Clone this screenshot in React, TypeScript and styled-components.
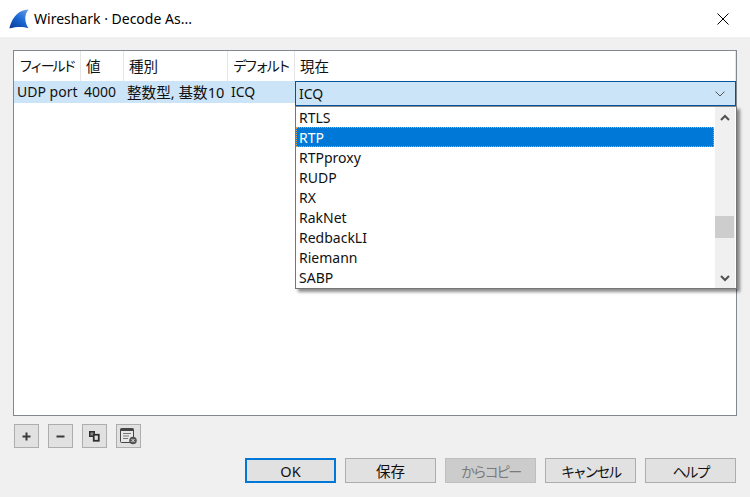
import React from "react";
import styled, { createGlobalStyle } from "styled-components";

const FONT = `"Noto Sans", "Noto Sans CJK JP", sans-serif`;

const Global = createGlobalStyle`
  html, body { margin: 0; padding: 0; background: #f0f0f0; }
  * { box-sizing: border-box; }
`;

const Dialog = styled.div`
  width: 750px;
  height: 497px;
  display: flex;
  flex-direction: column;
  background: #f0f0f0;
  font-family: ${FONT};
  font-size: 14px;
  color: #111;
  overflow: hidden;
`;

const TitleBar = styled.div`
  height: 37px;
  background: #fff;
  display: flex;
  align-items: center;
  padding: 0 21px 0 9px;
  gap: 5px;
`;

const TitleText = styled.div`
  flex: 1;
  color: #000;
`;

const Content = styled.div`
  flex: 1;
  display: flex;
  flex-direction: column;
  padding: 13px 13px 14px;
`;

const TableFrame = styled.div`
  position: relative;
  height: 366px;
  background: #fff;
  border: 1px solid #828790;
`;

const Grid = styled.div`
  display: grid;
  grid-template-columns: 67px 43px 104px 67px 1fr;
`;

const HeadCell = styled.div<{ $kana?: boolean }>`
  height: 30px;
  line-height: 30px;
  padding-left: 5px;
  white-space: nowrap;
  border-right: 1px solid #e5e5e5;
  font-size: ${(p) => (p.$kana ? "14px" : "14.5px")};
  letter-spacing: ${(p) => (p.$kana ? "-3px" : "0")};
  &:last-child { border-right: none; }
`;

const RowCell = styled.div<{ $cjk?: boolean }>`
  height: 22px;
  line-height: 22px;
  padding-left: 3px;
  white-space: nowrap;
  background: #cce4f7;
  font-size: ${(p) => (p.$cjk ? "14.6px" : "14px")};
`;

const Overlay = styled.div`
  position: absolute;
  top: 30px;
  left: 281px;
  right: 0;
`;

const Combo = styled.div`
  height: 25px;
  padding: 0 10px 0 3px;
  display: flex;
  align-items: center;
  justify-content: space-between;
  background: #cce4f7;
  border: 1px solid #005499;
`;

const Popup = styled.div`
  display: flex;
  height: 183px;
  background: #fff;
  border: 1px solid #767676;
  border-top-color: #8a8a8a;
  box-shadow: 3px 3px 3px rgba(0, 0, 0, 0.45);
  width: 442px;
`;

const List = styled.div`
  flex: 1;
`;

const Item = styled.div<{ $selected?: boolean }>`
  height: 20px;
  line-height: 20px;
  margin-right: 1px;
  padding-left: 2px;
  border: 1px dotted ${(p) => (p.$selected ? "#f2a23c" : "transparent")};
  background: ${(p) => (p.$selected ? "#0078d7" : "transparent")};
  color: ${(p) => (p.$selected ? "#fff" : "#111")};
`;

const ScrollBar = styled.div`
  width: 20px;
  margin-right: 1px;
  display: flex;
  flex-direction: column;
  justify-content: space-between;
  align-items: center;
  background: #f0f0f0;
  position: relative;
`;

const ArrowBox = styled.div`
  height: 20px;
  display: flex;
  align-items: center;
  justify-content: center;
`;

const Thumb = styled.div`
  position: absolute;
  top: 109px;
  left: 0;
  width: 19px;
  height: 22px;
  background: #cdcdcd;
`;

const Tools = styled.div`
  display: flex;
  gap: 9px;
  margin-top: 8px;
  padding-left: 1px;
`;

const ToolButton = styled.div`
  width: 25px;
  height: 24px;
  display: flex;
  align-items: center;
  justify-content: center;
  background: #e1e1e1;
  border: 1px solid #adadad;
`;

const Actions = styled.div`
  display: flex;
  justify-content: flex-end;
  gap: 9px;
  margin-top: 10px;
  padding-right: 1px;
`;

const Button = styled.div<{ $default?: boolean; $disabled?: boolean; $kana?: boolean }>`
  width: 91px;
  height: 25px;
  display: flex;
  align-items: center;
  justify-content: center;
  font-size: ${(p) => (p.$kana ? "14px" : "14.5px")};
  letter-spacing: ${(p) => (p.$kana ? "-2.2px" : "0")};
  background: ${(p) => (p.$disabled ? "#cccccc" : "#e1e1e1")};
  border: ${(p) => (p.$default ? "2px solid #0078d7" : p.$disabled ? "1px solid #bfbfbf" : "1px solid #adadad")};
  color: ${(p) => (p.$disabled ? "#7a7a7a" : "#111")};
`;

const Fin = () => (
  <svg width="20" height="20" viewBox="0 0 20 20">
    <defs>
      <linearGradient id="fin" x1="0.9" y1="0" x2="0.2" y2="1">
        <stop offset="0" stopColor="#5f9de6" />
        <stop offset="0.5" stopColor="#1a6ad4" />
        <stop offset="1" stopColor="#0a3f9e" />
      </linearGradient>
    </defs>
    <path d="M19.5 0.5C11 1 4 6 0.5 18.5C0.4 19.2 0.8 19.5 1.5 19.3C7 17.6 14 17.4 19.5 19.3C15.5 13 15 6 19.5 0.5Z" fill="url(#fin)" />
  </svg>
);

const Close = () => (
  <svg width="12" height="12" viewBox="0 0 12 12">
    <path d="M0.5 0.5L11.5 11.5M11.5 0.5L0.5 11.5" stroke="#000" strokeWidth="1" fill="none" />
  </svg>
);

const ComboArrow = () => (
  <svg width="10" height="6" viewBox="0 0 10 6">
    <path d="M0.5 0.5L5 5L9.5 0.5" stroke="#555" strokeWidth="1" fill="none" />
  </svg>
);

const ScrollUp = () => (
  <svg width="10" height="7" viewBox="0 0 10 7">
    <path d="M1 6L5 2L9 6" stroke="#505050" strokeWidth="2" fill="none" />
  </svg>
);

const ScrollDown = () => (
  <svg width="10" height="7" viewBox="0 0 10 7">
    <path d="M1 1L5 5L9 1" stroke="#505050" strokeWidth="2" fill="none" />
  </svg>
);

const Plus = () => (
  <svg width="9" height="9" viewBox="0 0 9 9">
    <path d="M0.5 4.5H8.5M4.5 0.5V8.5" stroke="#3a3a3a" strokeWidth="2" fill="none" />
  </svg>
);

const Minus = () => (
  <svg width="9" height="9" viewBox="0 0 9 9">
    <path d="M0.5 4.5H8.5" stroke="#3a3a3a" strokeWidth="2" fill="none" />
  </svg>
);

const CopyIcon = () => (
  <svg width="11" height="11" viewBox="0 0 11 11">
    <rect x="0.75" y="0.75" width="4.5" height="4.5" fill="#8a8a8a" stroke="#2e2e2e" strokeWidth="1.5" />
    <rect x="4.75" y="3.75" width="5" height="6" fill="#e1e1e1" stroke="#2e2e2e" strokeWidth="1.8" />
  </svg>
);

const ClearIcon = () => (
  <svg width="18" height="17" viewBox="0 0 18 17">
    <rect x="0.5" y="0.5" width="13" height="14" rx="1" fill="#e8e8e8" stroke="#444" />
    <rect x="0.5" y="0.5" width="13" height="2.5" fill="#444" />
    <path d="M3 5.5H11M3 8H9M3 10.5H8" stroke="#777" strokeWidth="1" fill="none" />
    <circle cx="13" cy="12.5" r="3.8" fill="#555" />
    <path d="M11.5 11L14.5 14M14.5 11L11.5 14" stroke="#eee" strokeWidth="1" fill="none" />
  </svg>
);

const items = ["RTLS", "RTP", "RTPproxy", "RUDP", "RX", "RakNet", "RedbackLI", "Riemann", "SABP"];
const heads = [
  { text: "フィールド", kana: true },
  { text: "値", kana: false },
  { text: "種別", kana: false },
  { text: "デフォルト", kana: true },
  { text: "現在", kana: false },
];
const cells = ["UDP port", "4000", "整数型, 基数10", "ICQ", ""];

export default function App() {
  return (
    <Dialog>
      <Global />
      <TitleBar>
        <Fin />
        <TitleText>Wireshark · Decode As...</TitleText>
        <Close />
      </TitleBar>
      <Content>
        <TableFrame>
          <Grid>
            {heads.map((h) => (
              <HeadCell key={h.text} $kana={h.kana}>{h.text}</HeadCell>
            ))}
            {cells.map((c, i) => (
              <RowCell key={i} $cjk={i === 2}>{c}</RowCell>
            ))}
          </Grid>
          <Overlay>
            <Combo>
              <span>ICQ</span>
              <ComboArrow />
            </Combo>
            <Popup>
              <List>
                {items.map((it) => (
                  <Item key={it} $selected={it === "RTP"}>
                    {it}
                  </Item>
                ))}
              </List>
              <ScrollBar>
                <ArrowBox>
                  <ScrollUp />
                </ArrowBox>
                <Thumb />
                <ArrowBox>
                  <ScrollDown />
                </ArrowBox>
              </ScrollBar>
            </Popup>
          </Overlay>
        </TableFrame>
        <Tools>
          <ToolButton><Plus /></ToolButton>
          <ToolButton><Minus /></ToolButton>
          <ToolButton><CopyIcon /></ToolButton>
          <ToolButton><ClearIcon /></ToolButton>
        </Tools>
        <Actions>
          <Button $default>OK</Button>
          <Button>保存</Button>
          <Button $disabled $kana>からコピー</Button>
          <Button $kana>キャンセル</Button>
          <Button $kana>ヘルプ</Button>
        </Actions>
      </Content>
    </Dialog>
  );
}
